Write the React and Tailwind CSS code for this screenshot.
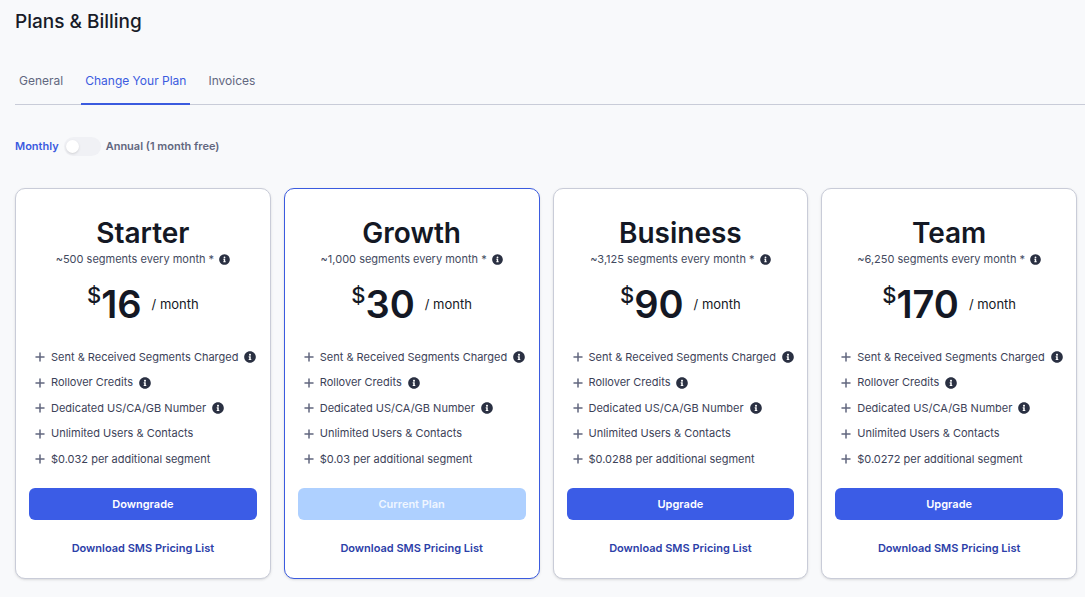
import React, { useState } from 'react';
import { FaInfoCircle } from 'react-icons/fa';

const tabs = ['General', 'Change Your Plan', 'Invoices'];

const plans = [
  { name: 'Starter', segments: '500', price: 16, extra: '0.032', action: 'Downgrade' },
  { name: 'Growth', segments: '1,000', price: 30, extra: '0.03', action: 'Current Plan', current: true },
  { name: 'Business', segments: '3,125', price: 90, extra: '0.0288', action: 'Upgrade' },
  { name: 'Team', segments: '6,250', price: 170, extra: '0.0272', action: 'Upgrade' },
];

const PlusIcon = () => (
  <svg viewBox="0 0 10 10" className="size-[10px] shrink-0 text-[#62677f]" fill="none" stroke="currentColor" strokeWidth="1.5">
    <path d="M5 1V9M1 5H9" strokeLinecap="round" />
  </svg>
);

const Feature = ({ children, info }) => (
  <li className="flex h-4 items-center whitespace-nowrap">
    <PlusIcon />
    <span className="ml-[6px]">{children}</span>
    {info && <FaInfoCircle size={12} className="ml-[6px] shrink-0 text-[#2a3042]" />}
  </li>
);

const PlanCard = ({ plan }) => (
  <section
    className={`flex flex-col rounded-[10px] border bg-white px-[13px] pt-[26px] pb-[22px] shadow-sm ${
      plan.current ? 'border-[#3b5bdf]' : 'border-[#c9ccd8]'
    }`}
  >
    <h2 className="text-center text-[28px] leading-9 font-semibold text-[#141824]">{plan.name}</h2>
    <p className="flex h-4 items-center justify-center gap-[5px] text-[11px] text-[#434a60]">
      ~{plan.segments} segments every month *
      <FaInfoCircle size={11} className="text-[#2a3042]" />
    </p>
    <div className="mt-4 flex h-[44px] items-center justify-center text-[#141824]">
      <span className="mb-5 text-[22px] leading-none font-medium">$</span>
      <span className="mb-[2px] text-[38px] leading-none font-semibold">{plan.price}</span>
      <span className="ml-[10px] text-[13px]">/ month</span>
    </div>
    <ul className="mt-[22px] flex h-[118px] flex-col justify-between pl-[6px] text-[11px] text-[#3c4258]">
      <Feature info>Sent &amp; Received Segments Charged</Feature>
      <Feature info>Rollover Credits</Feature>
      <Feature info>Dedicated US/CA/GB Number</Feature>
      <Feature>Unlimited Users &amp; Contacts</Feature>
      <Feature>${plan.extra} per additional segment</Feature>
    </ul>
    <button
      type="button"
      disabled={plan.current}
      className="mt-[21px] h-8 rounded-md bg-[#3b5ce6] text-[11px] font-semibold text-white disabled:bg-[#aed0ff] disabled:text-[#f0f6ff]"
    >
      {plan.action}
    </button>
    <a href="#pricing" className="mt-5 self-center text-[11px] leading-4 font-semibold text-[#2c40a8]">
      Download SMS Pricing List
    </a>
  </section>
);

const App = () => {
  const [annual, setAnnual] = useState(false);

  return (
    <main className="min-h-screen bg-[#f8f9fb] pt-2 pb-[18px] pl-[15px] font-['Inter',sans-serif]">
      <h1 className="text-[19px] leading-7 font-medium text-[#181c29]">Plans &amp; Billing</h1>

      <nav className="mt-8 flex gap-[14px] border-b border-[#c9ccd8] text-xs text-[#62677f]">
        {tabs.map((tab) => (
          <a
            key={tab}
            href="#"
            className={`-mb-px border-b-2 px-1 pt-[2px] pb-[11px] leading-[22px] ${
              tab === 'Change Your Plan' ? 'border-[#3b5bdf] text-[#3b5bdf]' : 'border-transparent'
            }`}
          >
            {tab}
          </a>
        ))}
      </nav>

      <label className="mt-[31px] flex h-5 w-fit cursor-pointer items-center text-[11px] font-semibold text-[#62677f]">
        <span className="text-[#3b5bdf]">Monthly</span>
        <input
          type="checkbox"
          role="switch"
          checked={annual}
          onChange={(e) => setAnnual(e.target.checked)}
          className="mx-[5px] flex h-[19px] w-[37px] appearance-none items-center rounded-full bg-[#f0f1f5] px-[2px] before:size-[13px] before:rounded-full before:bg-white before:shadow-sm checked:justify-end checked:bg-[#3b5bdf]"
        />
        <span>Annual (1 month free)</span>
      </label>

      <div className="mt-8 grid grid-cols-4 gap-[13px] pr-2">
        {plans.map((plan) => (
          <PlanCard key={plan.name} plan={plan} />
        ))}
      </div>
    </main>
  );
};

export default App;
